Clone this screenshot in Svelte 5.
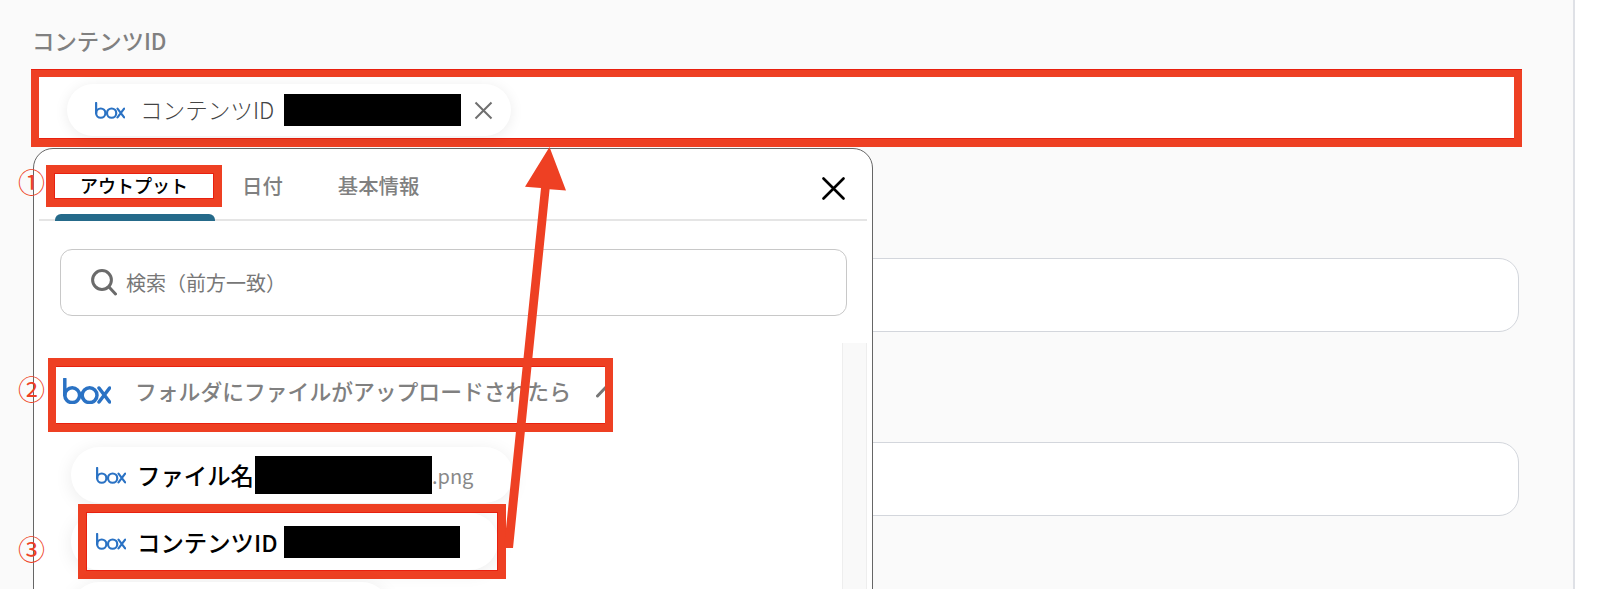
<script>
  const tabs = ['日付', '基本情報'];
</script>

{#snippet boxLogo(cls)}
  <svg class={cls} viewBox="0 0 48 26" fill="none" stroke="#2a72c4" stroke-width="3.5" aria-label="box">
    <path d="M1.8 1v16" stroke-linecap="round" />
    <circle cx="9.2" cy="17.2" r="7.4" />
    <circle cx="26.6" cy="17.2" r="7.4" />
    <path d="M36 10l10.6 14M46.6 10L36 24" stroke-linecap="round" />
  </svg>
{/snippet}

<div class="page">
  <div class="label">コンテンツID</div>
  <div class="field">
    <div class="chip">
      {@render boxLogo('logo-s')}
      <span class="chip-text">コンテンツID</span>
      <span class="mask chip-mask"></span>
      <svg class="chip-x" viewBox="0 0 19 19" fill="none" stroke="#6f6f6f" stroke-width="2"><path d="M1.5 1.5l16 16M17.5 1.5l-16 16" /></svg>
    </div>
  </div>
  <div class="input first"></div>
  <div class="input"></div>

  <div class="panel">
    <div class="tabs">
      <div class="tab-active">
        <div class="tab-mark">アウトプット</div>
        <div class="tab-bar"></div>
      </div>
      {#each tabs as t}
        <div class="tab">{t}</div>
      {/each}
      <svg class="close" viewBox="0 0 23 23" fill="none" stroke="#000" stroke-width="2.6" stroke-linecap="round"><path d="M1.5 1.5l20 20M21.5 1.5l-20 20" /></svg>
    </div>
    <div class="search">
      <svg class="glass" viewBox="0 0 26 27" fill="none" stroke="#6b6b6b" stroke-width="3" stroke-linecap="round"><circle cx="11" cy="11" r="9.4" /><path d="M18 18l6.5 7" /></svg>
      <span>検索（前方一致）</span>
    </div>
    <div class="body">
      <div class="list">
        <div class="section">
          {@render boxLogo('logo-l')}
          <span class="section-text">フォルダにファイルがアップロードされたら</span>
          <svg class="chev" viewBox="0 0 20 18" fill="none" stroke="#777" stroke-width="3" stroke-linecap="round"><path d="M1.5 14L14 1" /></svg>
        </div>
        <div class="pill one">
          {@render boxLogo('logo-s')}
          <span class="pill-text">ファイル名</span>
          <span class="mask name-mask"></span>
          <span class="ext">.png</span>
        </div>
        <div class="pill two">
          {@render boxLogo('logo-s')}
          <span class="pill-text">コンテンツID</span>
          <span class="mask id-mask"></span>
          <div class="pick"></div>
        </div>
        <div class="pill three"></div>
      </div>
      <div class="track"></div>
    </div>
  </div>

  <span class="num n1">①</span>
  <span class="num n2">②</span>
  <span class="num n3">③</span>

  <svg class="arrow" viewBox="0 0 1600 589">
    <path d="M549.5 147L566 190.5 549.6 189.2 513 548 504 548 541 188 525 186.8Z" fill="#ee4023" />
  </svg>
</div>

<style>
  :global(body) {
    margin: 0;
    background: #fff;
  }
  .page {
    position: relative;
    box-sizing: border-box;
    width: 1575px;
    height: 589px;
    padding: 25px 54px 0 31px;
    overflow: hidden;
    background: #fafafa;
    border-right: 2px solid #dfe1e6;
    font-family: "Noto Sans CJK JP", sans-serif;
  }
  .label {
    height: 30px;
    margin-left: 1px;
    font-size: 22.4px;
    line-height: 30px;
    color: #808080;
    font-weight: 500;
  }
  .field {
    box-sizing: border-box;
    width: 1491px;
    height: 77px;
    margin-top: 15px;
    padding: 7px 0 0 28px;
    background: #fff;
    border: 8px solid #ee4023;
    border-top-width: 7px;
    box-shadow: 0 -1px 0 #e8200f, inset 0 -1px 0 #e8200f;
  }
  .chip {
    display: flex;
    align-items: center;
    box-sizing: border-box;
    width: 444px;
    height: 52px;
    padding-left: 28px;
    background: #fff;
    border-radius: 26px;
    box-shadow: 0 2px 14px rgba(0, 0, 0, 0.08);
  }
  .logo-s {
    flex: none;
    width: 30px;
    height: 17px;
  }
  .logo-l {
    flex: none;
    width: 48px;
    height: 26px;
  }
  .chip-text {
    flex: none;
    width: 136px;
    margin: -2px 0 0 15px;
    font-size: 22.6px;
    color: #444;
    font-weight: 300;
    white-space: nowrap;
  }
  .mask {
    flex: none;
    display: block;
    background: #000;
  }
  .chip-mask {
    width: 177px;
    height: 32px;
    margin-left: 8px;
  }
  .chip-x {
    width: 19px;
    height: 19px;
    margin-left: 13px;
  }
  .input {
    box-sizing: border-box;
    width: 1478px;
    height: 74px;
    margin: 110px 0 0 10px;
    background: #fff;
    border: 1.5px solid #d3d6dc;
    border-radius: 20px;
  }
  .input.first {
    margin-top: 111px;
  }
  .panel {
    position: absolute;
    left: 33px;
    top: 148px;
    box-sizing: border-box;
    width: 840px;
    height: 460px;
    background: #fff;
    border: 1.5px solid #666;
    border-radius: 20px 20px 0 0;
  }
  .tabs {
    display: flex;
    align-items: flex-start;
    box-sizing: border-box;
    height: 72px;
    margin: 0 5px;
    padding: 16px 0 0 7px;
    border-bottom: 2px solid #e5e5e5;
  }
  .tab-active {
    flex: none;
    width: 176px;
  }
  .tab-mark {
    box-sizing: border-box;
    height: 42px;
    border: 8px solid #ee4023;
    background: #fff;
    box-shadow: inset 0 0 0 1px #e8200f;
    color: #000;
    font-size: 18px;
    font-weight: 500;
    line-height: 24px;
    text-align: center;
  }
  .tab-bar {
    width: 160px;
    height: 7px;
    margin: 7px 0 0 9px;
    background: #256a8a;
    border-radius: 6px 6px 0 0;
  }
  .tab {
    margin-left: 20px;
    font-size: 20.4px;
    line-height: 40px;
    color: #808080;
    font-weight: 500;
  }
  .tab + .tab {
    margin-left: 55px;
  }
  .close {
    width: 23px;
    height: 23px;
    margin: 12px 22px 0 auto;
  }
  .search {
    display: flex;
    align-items: center;
    box-sizing: border-box;
    width: 787px;
    height: 67px;
    margin: 28px 0 0 26px;
    padding-left: 30px;
    border: 1.5px solid #c8c8c8;
    border-radius: 12px;
    font-size: 20px;
    color: #777;
  }
  .glass {
    width: 26px;
    height: 27px;
    margin-right: 9px;
  }
  .body {
    display: flex;
    height: 250px;
    margin-top: 27px;
  }
  .list {
    flex: none;
    width: 808px;
  }
  .track {
    flex: none;
    box-sizing: border-box;
    width: 25px;
    height: 250px;
    background: #f9f9f9;
    border: solid #eee;
    border-width: 0 1px;
  }
  .section {
    display: flex;
    align-items: center;
    box-sizing: border-box;
    width: 565px;
    height: 74px;
    margin: 15px 0 0 14px;
    padding: 0 0 9px 7px;
    overflow: hidden;
    background: #fff;
    border: 8px solid #ee4023;
    box-shadow: inset 0 1px 0 #e8200f, inset 0 -1px 0 #e8200f;
  }
  .section-text {
    flex: none;
    margin-left: 24px;
    font-size: 21.8px;
    font-weight: 500;
    color: #808080;
    white-space: nowrap;
  }
  .chev {
    flex: none;
    width: 20px;
    height: 18px;
    margin-left: 25px;
  }
  .pill {
    position: relative;
    display: flex;
    align-items: center;
    box-sizing: border-box;
    margin-left: 37px;
    padding-left: 25px;
    background: #fff;
    border-radius: 29px;
    box-shadow: 0 3px 18px rgba(0, 0, 0, 0.08);
  }
  .pill-text {
    margin-left: 11px;
    font-size: 23.4px;
    font-weight: 500;
    color: #000;
    white-space: nowrap;
  }
  .one {
    width: 442px;
    height: 56px;
    margin-top: 15px;
  }
  .name-mask {
    width: 177px;
    height: 38px;
    margin-left: 1px;
  }
  .ext {
    font-size: 20px;
    color: #888;
  }
  .two {
    width: 427px;
    height: 57px;
    margin-top: 10px;
  }
  .id-mask {
    width: 176px;
    height: 32px;
    margin-left: 6px;
  }
  .pick {
    position: absolute;
    left: 7px;
    top: -9px;
    box-sizing: border-box;
    width: 428px;
    height: 75px;
    border: 8px solid #ee4023;
    box-shadow: inset 0 0 0 1px #e8200f;
  }
  .three {
    width: 319px;
    height: 56px;
    margin-top: 12px;
  }
  .num {
    position: absolute;
    font-size: 27px;
    line-height: 26px;
    color: #ee4023;
    font-weight: 400;
  }
  .n1 { left: 18px; top: 169px; }
  .n2 { left: 18px; top: 376px; }
  .n3 { left: 18px; top: 536px; }
  .arrow {
    position: absolute;
    left: 0;
    top: 0;
    width: 1600px;
    height: 589px;
    pointer-events: none;
  }
</style>
